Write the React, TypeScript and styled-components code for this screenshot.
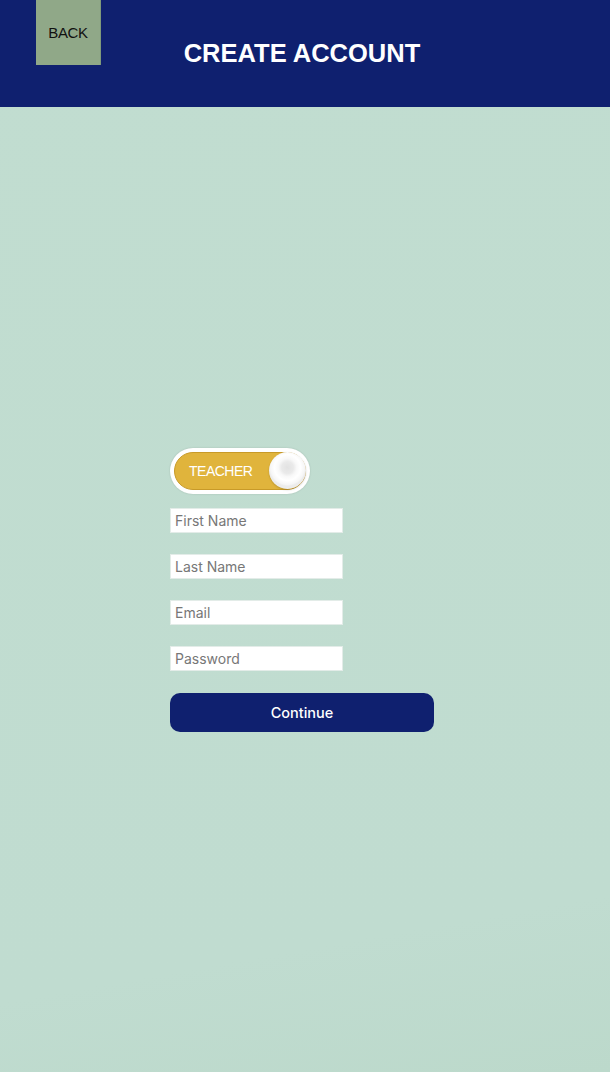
import React from "react";
import styled, { createGlobalStyle } from "styled-components";

const Global = createGlobalStyle`
  html, body { margin: 0; padding: 0; height: 100%; }
  body { font-family: "Liberation Sans", Arial, sans-serif; background: #c0ddd0; }
  #root { min-height: 100vh; }
  * { box-sizing: border-box; }
`;

const Page = styled.div`
  min-height: 100vh;
  display: flex;
  flex-direction: column;
  background: linear-gradient(170deg, #c1ddd0 0%, #c0dcd0 85%, #bcd9cb 100%);
`;

const Header = styled.header`
  height: 107px;
  background: #0f206f;
  display: grid;
  grid-template-columns: 36px 65px 1fr 107px;
  align-items: start;
`;

const BackButton = styled.button`
  grid-column: 2;
  height: 65px;
  width: 65px;
  margin: 0;
  border: none;
  border-right: 1px solid #7f9a7b;
  background: #90a888;
  color: #111;
  font-family: "Liberation Sans", Arial, sans-serif;
  font-size: 15px;
  letter-spacing: -0.3px;
  padding: 0;
  cursor: pointer;
`;

const Title = styled.h1`
  grid-column: 3;
  margin: 38px 0 0;
  text-align: center;
  color: #fff;
  font-family: "Liberation Sans", Arial, sans-serif;
  font-weight: 700;
  font-size: 25.5px;
  line-height: 30px;
  letter-spacing: 0;
`;

const Main = styled.main`
  flex: 1;
  display: flex;
  align-items: center;
  justify-content: center;
  padding-right: 6px;
`;

const Form = styled.form`
  width: 264px;
  display: flex;
  flex-direction: column;
  align-items: flex-start;
`;

const ToggleRing = styled.div`
  width: 140px;
  height: 46px;
  border-radius: 23px;
  background: #fff;
  padding: 4px;
  box-shadow: 0 0 2px rgba(0, 0, 0, 0.15);
  margin-bottom: 14px;
`;

const TogglePill = styled.div`
  height: 100%;
  border-radius: 19px;
  background: #e0b43c;
  border: 1px solid #c89a28;
  display: flex;
  align-items: center;
  justify-content: space-between;
  padding: 0 0 0 14px;
`;

const ToggleLabel = styled.span`
  color: #fff;
  font-family: "Liberation Sans", Arial, sans-serif;
  font-size: 14px;
  letter-spacing: -0.5px;
  margin-top: 1px;
`;

const Knob = styled.span`
  width: 37px;
  height: 37px;
  border-radius: 50%;
  background: radial-gradient(circle at 50% 42%, #e2e2e2 0, #eaeaea 6px, #f8f8f8 9px, #ffffff 13px, #f6f6f6 17px, #ececec 18.5px);
  box-shadow: 0 1px 2px rgba(0, 0, 0, 0.18);
  margin-right: -1px;
`;

const Input = styled.input`
  width: 173px;
  height: 25px;
  border: 1px solid #e3ece8;
  background: #fff;
  padding: 0 4px;
  margin: 0 0 21px;
  font-family: Inter, "Noto Sans", sans-serif;
  font-size: 14px;
  color: #333;
  outline: none;
  &::placeholder { color: #777; }
`;

const Continue = styled.button`
  width: 264px;
  height: 39px;
  margin-top: 1px;
  border: none;
  border-radius: 10px;
  background: #0f206f;
  color: #fff;
  font-family: Inter, "Noto Sans", sans-serif;
  font-size: 14.5px;
  font-weight: 500;
  cursor: pointer;
`;

export default function App() {
  return (
    <>
      <Global />
      <Page>
        <Header>
          <BackButton type="button">BACK</BackButton>
          <Title>CREATE ACCOUNT</Title>
        </Header>
        <Main>
          <Form onSubmit={(e) => e.preventDefault()}>
            <ToggleRing>
              <TogglePill>
                <ToggleLabel>TEACHER</ToggleLabel>
                <Knob />
              </TogglePill>
            </ToggleRing>
            <Input placeholder="First Name" />
            <Input placeholder="Last Name" />
            <Input placeholder="Email" />
            <Input placeholder="Password" type="password" />
            <Continue type="submit">Continue</Continue>
          </Form>
        </Main>
      </Page>
    </>
  );
}
